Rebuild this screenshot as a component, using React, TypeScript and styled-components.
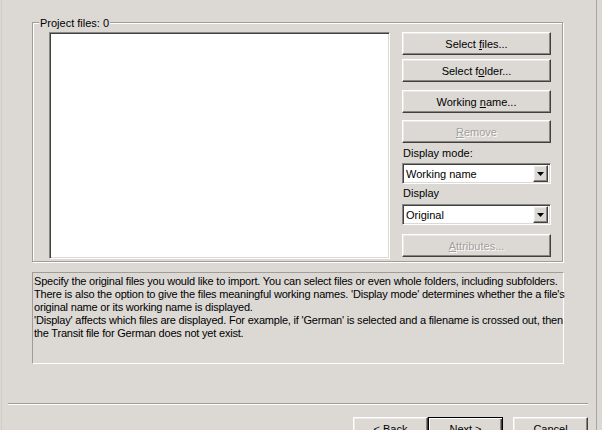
import styled, { createGlobalStyle, css } from "styled-components";

const FACE = "#dcd9d5";

const GlobalStyle = createGlobalStyle`
  html, body {
    margin: 0;
    padding: 0;
    background: ${FACE};
  }
  body {
    font-family: "Liberation Sans", Arial, sans-serif;
    font-size: 11px;
    color: #000;
  }
`;

const Window = styled.div`
  width: 602px;
  height: 430px;
  overflow: hidden;
  background: ${FACE};
`;

const Frame = styled.div`
  box-sizing: border-box;
  width: 596px;
  height: 430px;
  margin-left: 1px;
  border-left: 1px solid #cfccc7;
  border-right: 1px solid #a8a6a2;
  padding-top: 22px;
`;

const Content = styled.div`
  margin-left: 30px;
`;

const Group = styled.div`
  position: relative;
  box-sizing: border-box;
  width: 531px;
  border: 1px solid #a09d99;
  box-shadow: inset 1px 1px #fff, 1px 1px #fff;
  padding: 9px 11px 2px 16px;
  display: flex;
  gap: 12px;
`;

const GroupLabel = styled.span`
  position: absolute;
  top: -6px;
  left: 6px;
  padding: 0 1px;
  line-height: 13px;
  background: ${FACE};
`;

const sunken = css`
  border: 1px solid;
  border-color: #8a8783 #fff #fff #8a8783;
  box-shadow: inset 1px 1px #404040, inset -1px -1px ${FACE};
`;

const raised = css`
  border: 1px solid;
  border-color: #fff #404040 #404040 #fff;
  box-shadow: inset -1px -1px #888580, inset 1px 1px #ebe9e5;
`;

const ListBox = styled.div`
  box-sizing: border-box;
  width: 341px;
  height: 227px;
  background: #fff;
  ${sunken}
`;

const Column = styled.div`
  width: 149px;
  display: flex;
  flex-direction: column;
`;

const Button = styled.button<{ $w?: number; $top?: number; $left?: number; $default?: boolean }>`
  box-sizing: border-box;
  width: ${(p) => p.$w ?? 149}px;
  height: 23px;
  margin-top: ${(p) => p.$top ?? 0}px;
  margin-left: ${(p) => p.$left ?? 0}px;
  padding: 0;
  background: ${FACE};
  font: 11px "Liberation Sans", Arial, sans-serif;
  color: #000;
  ${raised}
  &:disabled {
    color: #a3a09c;
    text-shadow: 1px 1px #fff;
  }
  ${(p) =>
    p.$default &&
    css`
      border: 1px solid #000;
      box-shadow: inset 1px 1px #fff, inset -1px -1px #404040,
        inset -2px -2px #888580;
    `}
`;

const U = styled.span`
  text-decoration: underline;
  text-underline-offset: 1px;
`;

const FieldLabel = styled.div<{ $top: number }>`
  margin-top: ${(p) => p.$top}px;
  line-height: 13px;
  padding-left: 1px;
`;

const Combo = styled.div<{ $top: number }>`
  box-sizing: border-box;
  width: 149px;
  height: 21px;
  margin-top: ${(p) => p.$top}px;
  background: #fff;
  ${sunken}
  display: flex;
  align-items: center;
  padding: 2px;
`;

const ComboText = styled.span`
  flex: 1;
  padding-left: 1px;
`;

const ComboArrow = styled.div`
  box-sizing: border-box;
  width: 15px;
  height: 17px;
  background: ${FACE};
  ${raised}
  display: flex;
  align-items: center;
  justify-content: center;
`;

const Description = styled.div`
  box-sizing: border-box;
  width: 532px;
  height: 92px;
  margin-top: 10px;
  padding: 2px 1px 0;
  border: 1px solid;
  border-color: #a09d99 #fff #fff #a09d99;
  line-height: 13px;
  white-space: nowrap;
  letter-spacing: -0.2px;
`;

const Separator = styled.div`
  height: 0;
  margin: 39px 8px 0 6px;
  border-top: 1px solid #a09d99;
  border-bottom: 1px solid #fff;
`;

const ButtonRow = styled.div`
  display: flex;
  justify-content: flex-end;
  padding-right: 8px;
  margin-top: 12px;
`;

const Arrow = () => (
  <svg width="7" height="4" viewBox="0 0 7 4">
    <polygon points="0,0 7,0 3.5,4" fill="#000" />
  </svg>
);

const Select = ({ top, value }: { top: number; value: string }) => (
  <Combo $top={top}>
    <ComboText>{value}</ComboText>
    <ComboArrow>
      <Arrow />
    </ComboArrow>
  </Combo>
);

export default function App() {
  return (
    <>
      <GlobalStyle />
      <Window>
        <Frame>
          <Content>
            <Group>
              <GroupLabel>Project files: 0</GroupLabel>
              <ListBox />
              <Column>
                <Button>
                  Select <U>f</U>iles...
                </Button>
                <Button $top={4}>
                  Select f<U>o</U>lder...
                </Button>
                <Button $top={8}>
                  Working <U>n</U>ame...
                </Button>
                <Button $top={7} disabled>
                  <U>R</U>emove
                </Button>
                <FieldLabel $top={4}>Display mode:</FieldLabel>
                <Select top={3} value="Working name" />
                <FieldLabel $top={3}>Display</FieldLabel>
                <Select top={4} value="Original" />
                <Button $top={9} disabled>
                  <U>A</U>ttributes...
                </Button>
              </Column>
            </Group>
            <Description>
              Specify the original files you would like to import. You can select files or even whole folders, including subfolders.
              <br />
              There is also the option to give the files meaningful working names. 'Display mode' determines whether the a file's
              <br />
              original name or its working name is displayed.
              <br />
              'Display' affects which files are displayed. For example, if 'German' is selected and a filename is crossed out, then
              <br />
              the Transit file for German does not yet exist.
            </Description>
          </Content>
          <Separator />
          <ButtonRow>
            <Button $w={75}>
              &lt; <U>B</U>ack
            </Button>
            <Button $w={75} $default>
              <U>N</U>ext &gt;
            </Button>
            <Button $w={75} $left={10}>
              Cancel
            </Button>
          </ButtonRow>
        </Frame>
      </Window>
    </>
  );
}
